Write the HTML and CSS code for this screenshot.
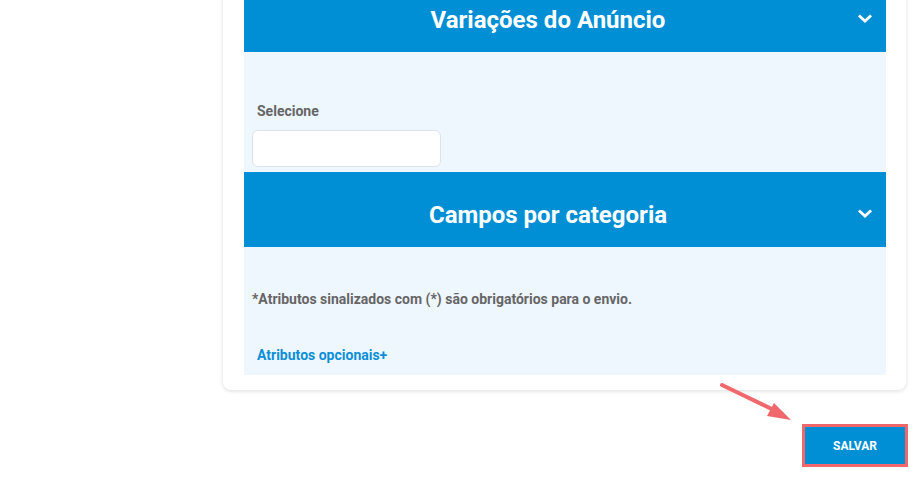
FILE: index.html
```html
<!DOCTYPE html>
<html lang="pt-BR">
<head>
    <meta charset="UTF-8">
    <meta name="viewport" content="width=device-width, initial-scale=1.0">
    <title>Editar Anúncio</title>
    <link rel="stylesheet" href="styles.css">
</head>
<body>
    <div class="page">
        <div class="card">
            <section class="panel">
                <div class="panel-header">
                    <h2>Variações do Anúncio</h2>
                    <span class="chevron">
                        <svg width="14" height="10" viewBox="0 0 14 10"><path d="M2 2.5 L7 7 L12 2.5" fill="none" stroke="#fff" stroke-width="2.8" stroke-linecap="square"/></svg>
                    </span>
                </div>
                <div class="panel-body variations">
                    <label for="variation-select">Selecione</label>
                    <input id="variation-select" type="text">
                </div>
            </section>
            <section class="panel">
                <div class="panel-header">
                    <h2>Campos por categoria</h2>
                    <span class="chevron">
                        <svg width="14" height="10" viewBox="0 0 14 10"><path d="M2 2.5 L7 7 L12 2.5" fill="none" stroke="#fff" stroke-width="2.8" stroke-linecap="square"/></svg>
                    </span>
                </div>
                <div class="panel-body fields">
                    <p class="note">*Atributos sinalizados com (*) são obrigatórios para o envio.</p>
                    <a href="#" class="optional">Atributos opcionais+</a>
                </div>
            </section>
        </div>
        <div class="actions">
            <button class="save">SALVAR</button>
            <svg class="pointer" width="80" height="45" viewBox="0 0 80 45">
                <line x1="2" y1="2" x2="62" y2="31" stroke="#f0686b" stroke-width="4" stroke-linecap="round"/>
                <polygon points="71,37 54,20 47,33" fill="#f0686b"/>
            </svg>
        </div>
    </div>
</body>
</html>
```

FILE: styles.css
```css
body {
    font-family: Roboto, "Liberation Sans", Arial, sans-serif;
    margin: 0;
    padding: 0;
    background-color: #fff;
    overflow: hidden;
}
.page {
    width: 921px;
    height: 480px;
    overflow: hidden;
}
.card {
    margin: -23px 0 0 223px;
    width: 683px;
    box-sizing: border-box;
    padding: 0 20px 15px 21px;
    background: #fff;
    border-radius: 0 0 8px 8px;
    box-shadow: 0 1px 4px rgba(0, 0, 0, 0.14);
}
.panel-header {
    display: flex;
    align-items: center;
    height: 75px;
    background-color: #008fd5;
    color: #fff;
}
.panel-header h2 {
    flex: 1;
    margin: 0;
    text-align: center;
    font-size: 24px;
    font-weight: 700;
    line-height: 1;
    padding-top: 10px;
    box-sizing: border-box;
    height: 75px;
    display: flex;
    align-items: center;
    justify-content: center;
}
.chevron {
    width: 34px;
    display: flex;
    justify-content: flex-start;
    padding-left: 6px;
    box-sizing: border-box;
    padding-top: 8px;
}
.panel-body {
    background-color: #eef6fe;
}
.variations {
    height: 120px;
    box-sizing: border-box;
    padding: 50px 0 0 8px;
}
.variations label {
    display: block;
    margin-left: 5px;
    font-size: 14px;
    font-weight: 700;
    color: #666;
    line-height: 18px;
}
.variations input {
    display: block;
    margin-top: 10px;
    width: 189px;
    height: 37px;
    box-sizing: border-box;
    border: 1px solid #dde3ea;
    border-radius: 6px;
    background: #fff;
}
.fields {
    height: 128px;
    box-sizing: border-box;
    padding: 43px 0 0 8px;
}
.note {
    margin: 0;
    font-size: 14px;
    font-weight: 700;
    color: #666;
    line-height: 18px;
}
.optional {
    display: inline-block;
    margin: 38px 0 0 5px;
    font-size: 14px;
    font-weight: 700;
    color: #0a8fd6;
    text-decoration: none;
    line-height: 18px;
}
.actions {
    position: relative;
    display: flex;
    justify-content: flex-end;
    padding: 37px 16px 0 0;
}
.save {
    width: 100px;
    height: 37px;
    background-color: #008fd5;
    color: #fff;
    border: none;
    outline: 3px solid #f0686b;
    font-family: inherit;
    font-size: 12px;
    font-weight: 700;
    cursor: pointer;
}
.pointer {
    position: absolute;
    left: 720px;
    top: -7px;
}
```
